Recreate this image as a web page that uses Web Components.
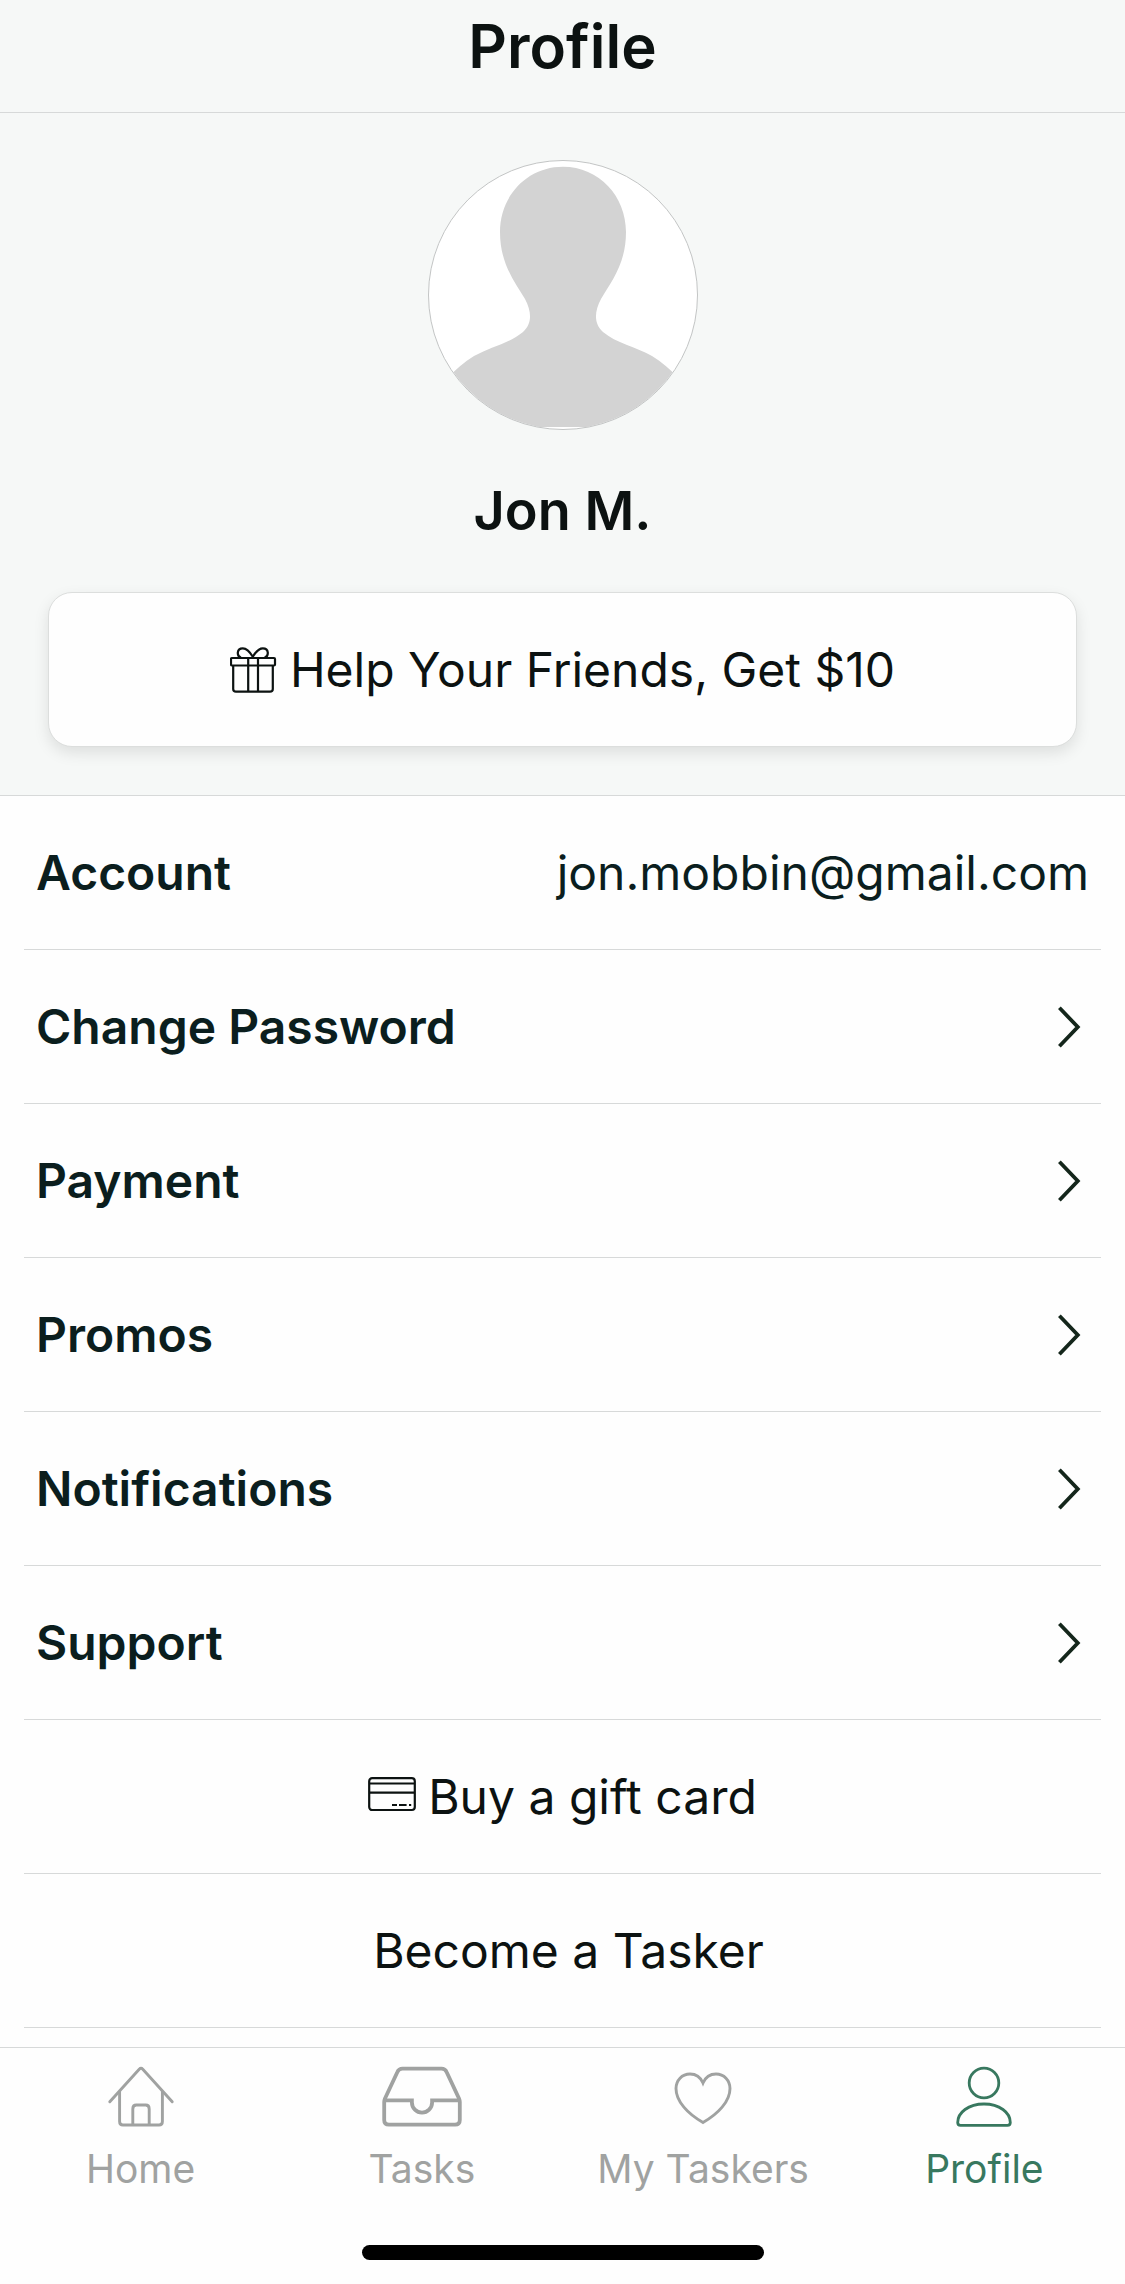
<!DOCTYPE html>
<html lang="en">
<head>
    <meta charset="UTF-8">
    <meta name="viewport" content="width=device-width, initial-scale=1.0">
    <title>Profile</title>
    <style>
        body {
            margin: 0;
            font-family: Inter, "Liberation Sans", sans-serif;
            color: #0c1211;
            background: #fefefe;
            --line: #d7d9d9;
            --panel: #f6f8f7;
        }
    </style>
</head>
<body>
    <profile-page>
        <page-header slot="header">Profile</page-header>
        <profile-hero>
            Jon M.
            <action-button slot="action" icon="gift">Help Your Friends, Get $10</action-button>
        </profile-hero>
        <settings-row value="jon.mobbin@gmail.com">Account</settings-row>
        <settings-row href="#password">Change Password</settings-row>
        <settings-row href="#payment">Payment</settings-row>
        <settings-row href="#promos">Promos</settings-row>
        <settings-row href="#notifications">Notifications</settings-row>
        <settings-row href="#support">Support</settings-row>
        <link-row href="#gift-card" icon="card">Buy a gift card</link-row>
        <link-row href="#tasker">Become a Tasker</link-row>
        <tab-bar slot="footer">
            <tab-item href="#home" icon="home">Home</tab-item>
            <tab-item href="#tasks" icon="tray">Tasks</tab-item>
            <tab-item href="#taskers" icon="heart">My Taskers</tab-item>
            <tab-item href="#profile" icon="person" active>Profile</tab-item>
        </tab-bar>
    </profile-page>

    <script>
        const icons = {
            gift: `<svg width="48" height="46" viewBox="0 0 48 46" stroke-width="2.2">
                <rect x="1" y="11" width="44" height="7.5" rx="1"/>
                <path d="M3.2 18.5V42Q3.2 44.7 6 44.7H40Q42.8 44.7 42.8 42V18.5M18.2 11V44.7M28 11V44.7"/>
                <path d="M22.8 9.8C20 5 16.2 1.3 12.8 1.3C6.5 1.3 6.5 9 11 10.8M22.8 9.8C25.6 5 29.4 1.3 32.8 1.3C39.1 1.3 39.1 9 34.6 10.8"/>
            </svg>`,
            card: `<svg width="48" height="40" viewBox="0 0 48 40" stroke-width="2.2">
                <rect x="1.2" y="1.2" width="45.6" height="31.8" rx="3"/>
                <path d="M1 6.5H47M1 15.7H47M24 28H29M31 28H38.6M41 28H43.2"/>
            </svg>`,
            chevron: `<svg width="33" height="42" viewBox="0 0 33 42" stroke-width="3.8">
                <path d="M3.4 1.8L21.8 21L3.4 40.2"/>
            </svg>`,
            home: `<svg width="90" height="63" viewBox="0 0 90 63" stroke-width="2.9" stroke-linecap="round">
                <path d="M13.8 35.8L43.2 3.2Q45 1.4 46.8 3.2L76.2 35.8"/>
                <path stroke-linecap="butt" d="M23.6 25V55.5Q23.6 59 27 59H63Q66.4 59 66.4 55.5V25M36.8 59V43Q36.8 39 40.3 39H49.7Q53.2 39 53.2 43V59"/>
            </svg>`,
            tray: `<svg width="90" height="63" viewBox="0 0 90 63" stroke-width="3.8">
                <path d="M7.2 36Q7.2 34.5 8 32.5L20.4 6Q21.8 2.6 25.5 2.6H64.5Q68.2 2.6 69.6 6L82 32.5Q82.8 34.5 82.8 36V54Q82.8 58.7 78 58.7H12Q7.2 58.7 7.2 54Z"/>
                <path d="M8 34.3H34.9V36.5A10.1 10.1 0 0 0 55.1 36.5V34.3H82"/>
            </svg>`,
            heart: `<svg width="90" height="63" viewBox="0 0 90 63" stroke-width="2.9">
                <path d="M45 17C42.4 11 37.5 8 32 8C24 8 18 14.2 18 22.5C18 35.5 30 48 45 56.5C60 48 72 35.5 72 22.5C72 14.2 66 8 58 8C52.5 8 47.6 11 45 17Z"/>
            </svg>`,
            person: `<svg width="90" height="63" viewBox="0 0 90 63" stroke-width="2.8">
                <ellipse cx="45" cy="17" rx="14.8" ry="14.9"/>
                <path d="M21.5 59.3H68.5Q71.3 59.3 71.3 56.5C71.3 46.5 60.5 38 45 38C29.5 38 18.7 46.5 18.7 56.5Q18.7 59.3 21.5 59.3Z"/>
            </svg>`
        };

        class BaseElement extends HTMLElement {
            constructor() {
                super();
                this.attachShadow({ mode: 'open' });
            }

            connectedCallback() {
                this.shadowRoot.innerHTML = this.render();
            }
        }

        class AppIcon extends BaseElement {
            render() {
                return `
                    <style>
                        :host { display: block; flex: none; }
                        svg { display: block; fill: none; stroke: currentColor; }
                    </style>
                    ${icons[this.getAttribute('name')] || ''}
                `;
            }
        }

        class ProfilePage extends BaseElement {
            render() {
                return `
                    <style>
                        :host {
                            display: flex;
                            flex-direction: column;
                            min-height: 100vh;
                        }
                        main { flex: 1; }
                    </style>
                    <slot name="header"></slot>
                    <main><slot></slot></main>
                    <slot name="footer"></slot>
                `;
            }
        }

        class PageHeader extends BaseElement {
            render() {
                return `
                    <style>
                        :host {
                            display: block;
                            padding: 10px 24px 30px;
                            background: var(--panel);
                            border-bottom: 1px solid var(--line);
                            text-align: center;
                        }
                        h1 {
                            margin: 0;
                            font-size: 60px;
                            line-height: 72px;
                            font-weight: 600;
                        }
                    </style>
                    <h1><slot></slot></h1>
                `;
            }
        }

        class ProfileHero extends BaseElement {
            render() {
                return `
                    <style>
                        :host {
                            display: flex;
                            flex-direction: column;
                            align-items: center;
                            gap: 48px;
                            padding: 47px 48px 48px;
                            background: var(--panel);
                            border-bottom: 1px solid var(--line);
                        }
                        svg { display: block; }
                        h2 {
                            margin: 0;
                            font-size: 54px;
                            line-height: 66px;
                            font-weight: 600;
                        }
                        ::slotted(action-button) { align-self: stretch; }
                    </style>
                    <svg width="270" height="270" viewBox="0 0 270 270" role="img" aria-label="Profile photo">
                        <clipPath id="round"><circle cx="135" cy="135" r="134"/></clipPath>
                        <circle cx="135" cy="135" r="134.5" fill="#fff"/>
                        <path clip-path="url(#round)" fill="#d3d3d3" d="M135 6.7C99 6.7 72 36 72 72C72 104 87 122 97 139C104 152 104 164 95 172C82 183 62 187 46 196C36 202 28 209 20 218V267H250V218C242 209 234 202 224 196C208 187 188 183 175 172C166 164 166 152 173 139C183 122 198 104 198 72C198 36 171 6.7 135 6.7Z"/>
                        <circle cx="135" cy="135" r="134.5" fill="none" stroke="#c3c5c5"/>
                    </svg>
                    <h2><slot></slot></h2>
                    <slot name="action"></slot>
                `;
            }
        }

        class ActionButton extends BaseElement {
            render() {
                return `
                    <style>
                        :host { display: block; }
                        button {
                            display: flex;
                            align-items: center;
                            justify-content: center;
                            gap: 12px;
                            width: 100%;
                            padding: 47px 24px 46px;
                            border: 1px solid #dcdedd;
                            border-radius: 24px;
                            background: #fefefe;
                            box-shadow: 0 6px 15px rgba(0, 0, 0, 0.1);
                            font: inherit;
                            font-size: 48px;
                            line-height: 60px;
                            color: inherit;
                        }
                    </style>
                    <button type="button">
                        <app-icon name="${this.getAttribute('icon')}"></app-icon>
                        <span><slot></slot></span>
                    </button>
                `;
            }
        }

        class SettingsRow extends BaseElement {
            render() {
                const value = this.getAttribute('value');
                const href = this.getAttribute('href');
                const tag = href ? 'a' : 'div';
                return `
                    <style>
                        :host {
                            display: block;
                            margin: 0 24px;
                            border-bottom: 1px solid var(--line);
                            color: #0b1e1e;
                        }
                        .row {
                            display: flex;
                            align-items: center;
                            justify-content: space-between;
                            gap: 24px;
                            padding: 47px 12px 46px;
                            font-size: 48px;
                            line-height: 60px;
                            color: inherit;
                            text-decoration: none;
                        }
                        .label { font-weight: 600; }
                        app-icon { color: #14261b; }
                    </style>
                    <${tag} class="row" ${href ? `href="${href}"` : ''}>
                        <span class="label"><slot></slot></span>
                        ${value ? `<span>${value}</span>` : '<app-icon name="chevron"></app-icon>'}
                    </${tag}>
                `;
            }
        }

        class LinkRow extends BaseElement {
            render() {
                return `
                    <style>
                        :host {
                            display: block;
                            margin: 0 24px;
                            border-bottom: 1px solid var(--line);
                        }
                        a {
                            display: flex;
                            align-items: center;
                            justify-content: center;
                            gap: 12px;
                            padding: 47px 12px 46px;
                            font-size: 48px;
                            line-height: 60px;
                            color: inherit;
                            text-decoration: none;
                        }
                    </style>
                    <a href="${this.getAttribute('href')}">
                        <app-icon name="${this.getAttribute('icon')}"></app-icon>
                        <span><slot></slot></span>
                    </a>
                `;
            }
        }

        class TabBar extends BaseElement {
            render() {
                return `
                    <style>
                        :host {
                            display: block;
                            position: sticky;
                            bottom: 0;
                            padding: 18px 0 24px;
                            background: #fefefe;
                            border-top: 1px solid var(--line);
                        }
                        nav {
                            display: grid;
                            grid-template-columns: repeat(4, 1fr);
                        }
                        .indicator {
                            width: 402px;
                            max-width: 60%;
                            height: 15px;
                            margin: 52px auto 0;
                            border-radius: 8px;
                            background: #000;
                        }
                    </style>
                    <nav aria-label="Main"><slot></slot></nav>
                    <div class="indicator"></div>
                `;
            }
        }

        class TabItem extends BaseElement {
            render() {
                return `
                    <style>
                        :host { display: block; color: #a0a2a1; }
                        :host([active]) { color: #38785f; }
                        a {
                            display: flex;
                            flex-direction: column;
                            align-items: center;
                            gap: 16px;
                            font-size: 39px;
                            line-height: 48px;
                            color: inherit;
                            text-decoration: none;
                        }
                    </style>
                    <a href="${this.getAttribute('href')}" ${this.hasAttribute('active') ? 'aria-current="page"' : ''}>
                        <app-icon name="${this.getAttribute('icon')}"></app-icon>
                        <span><slot></slot></span>
                    </a>
                `;
            }
        }

        customElements.define('app-icon', AppIcon);
        customElements.define('profile-page', ProfilePage);
        customElements.define('page-header', PageHeader);
        customElements.define('profile-hero', ProfileHero);
        customElements.define('action-button', ActionButton);
        customElements.define('settings-row', SettingsRow);
        customElements.define('link-row', LinkRow);
        customElements.define('tab-bar', TabBar);
        customElements.define('tab-item', TabItem);
    </script>
</body>
</html>
